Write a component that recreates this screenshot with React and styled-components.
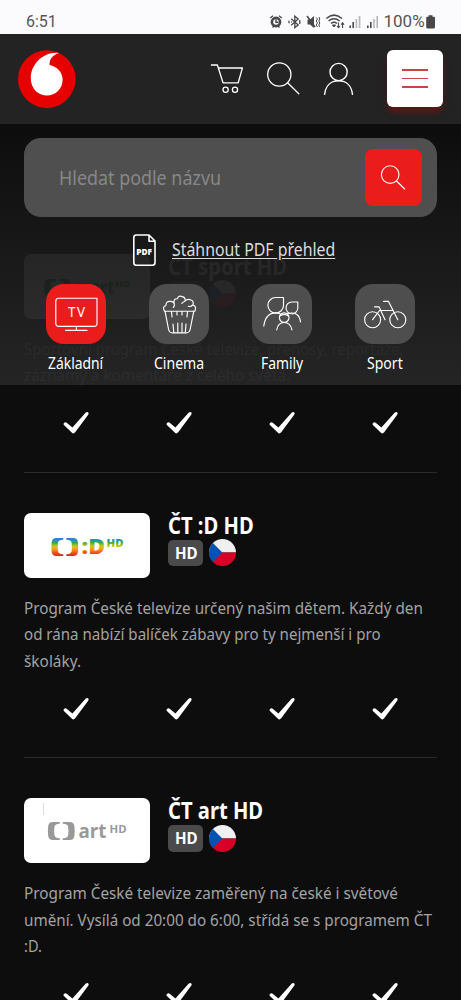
import React, { useLayoutEffect, useRef, useState } from "react";
import styled, { createGlobalStyle } from "styled-components";

const GlobalStyle = createGlobalStyle`
  *, *::before, *::after { box-sizing: border-box; }
  body {
    margin: 0;
    background: #0d0d0d;
    color: #fff;
    font-family: "Noto Sans", "Open Sans", sans-serif;
    overflow: hidden;
  }
  svg { display: block; flex: none; }
`;

/* ---------- text fitted to a given width ---------- */

const FitBox = styled.span`
  display: block;
  width: ${(p) => p.$w}px;
  white-space: nowrap;
`;
const FitInner = styled.span`
  display: inline-block;
  transform-origin: 0 50%;
`;
function Fit({ w, children }) {
  const ref = useRef(null);
  const [k, setK] = useState(1);
  useLayoutEffect(() => {
    setK(w / ref.current.offsetWidth);
  }, [w]);
  return (
    <FitBox $w={w}>
      <FitInner ref={ref} style={{ transform: `scaleX(${k})` }}>
        {children}
      </FitInner>
    </FitBox>
  );
}

/* ---------- page frame ---------- */

const Screen = styled.div`
  position: relative;
  width: 461px;
  height: 1000px;
  overflow: hidden;
  background: #0d0d0d;
`;
const Overlay = styled.div`
  position: absolute;
  inset: 0 0 auto 0;
`;
const StatusBar = styled.div`
  height: 34px;
  padding: 9px 25px 0 26px;
  display: flex;
  justify-content: space-between;
  background: #fbfbfe;
  color: #555;
  font: 17px/25px Roboto, sans-serif;
`;
const StatusRight = styled.div`
  display: flex;
  align-items: flex-start;
`;
const Percent = styled.div`
  margin: 0 1.5px 0 1px;
`;
const Header = styled.header`
  height: 90px;
  padding: 0 18px 1px;
  display: flex;
  align-items: center;
  background: #232323;
`;
const HeaderIcons = styled.div`
  display: flex;
  align-items: center;
  gap: 22px;
  margin-left: auto;
  margin-right: 30.5px;
`;
const MenuButton = styled.button`
  width: 56.5px;
  height: 57px;
  padding: 0;
  border: 0;
  border-radius: 6px;
  background: #fff;
  display: flex;
  flex-direction: column;
  align-items: center;
  justify-content: center;
  gap: 7.4px;
  box-shadow: 0 6px 6px -1px rgba(160, 10, 10, 0.5);
`;
const MenuLine = styled.span`
  width: 26px;
  height: 1.2px;
  background: #cb4444;
`;

/* ---------- filter panel ---------- */

const Panel = styled.section`
  height: 260.5px;
  padding: 14px 24px 0;
  background: linear-gradient(rgba(13, 13, 13, 0.95), rgba(38, 38, 38, 0.95));
`;
const SearchBox = styled.div`
  height: 79px;
  padding: 0 15.5px 0 34.5px;
  border-radius: 17px;
  background: #4f4f4f;
  display: flex;
  align-items: center;
  justify-content: space-between;
  color: #878787;
  font-size: 20px;
`;
const SearchButton = styled.button`
  width: 57px;
  height: 57px;
  padding: 0;
  border: 0;
  border-radius: 8px;
  background: #eb1c1c;
  display: grid;
  place-items: center;
`;
const PdfRow = styled.div`
  margin: 17px 0 0 109px;
  height: 32px;
  display: flex;
  align-items: center;
  gap: 16px;
`;
const PdfLink = styled.a`
  padding-bottom: 2px;
  color: #dcdcdc;
  font-size: 18px;
  line-height: 26px;
  text-decoration: underline;
  text-decoration-thickness: 1.3px;
  text-underline-offset: 2px;
`;
const Columns = styled.div`
  display: grid;
  grid-template-columns: repeat(4, 1fr);
  justify-items: center;
`;
const Categories = styled(Columns)`
  margin-top: 18px;
`;
const Category = styled.div`
  display: flex;
  flex-direction: column;
  align-items: center;
  font-size: 16px;
  line-height: 24px;
  gap: 7px;
`;
const Tile = styled.div`
  width: 60px;
  height: 60px;
  border-radius: 18px;
  background: ${(p) => (p.$active ? "#eb1c1c" : "#4e4e4e")};
`;

/* ---------- channel list ---------- */

const List = styled.main`
  padding: 212.8px 24px 0;
`;
const Channel = styled.article`
  padding-top: 40px;
  border-top: 1px solid #2b2b2b;
`;
const Top = styled.div`
  display: flex;
  gap: 18px;
`;
const LogoCard = styled.div`
  width: 126px;
  height: 65px;
  border-radius: 7px;
  background: #fff;
`;
const Info = styled.div`
  display: flex;
  flex-direction: column;
`;
const Title = styled.h2`
  margin: -2px 0 0;
  height: 28.5px;
  font-size: 22.5px;
  line-height: 29px;
  font-weight: 700;
`;
const Tags = styled.div`
  display: flex;
  align-items: center;
  gap: 6px;
`;
const Quality = styled.span`
  width: 35px;
  height: 26.5px;
  padding-left: 6.5px;
  border-radius: 5px;
  background: #4a4a4a;
  font-size: 16.5px;
  line-height: 25px;
  font-weight: 700;
`;
const Text = styled.div`
  margin-top: 17px;
  color: #a3a3a3;
  font-size: 17px;
  line-height: 26.5px;
`;
const Checks = styled(Columns)`
  height: 83px;
  padding-top: 22.7px;
`;

/* ---------- drawings ---------- */

const line = { fill: "none", stroke: "#fff", strokeLinecap: "round", strokeLinejoin: "round" };

const BrandMark = () => (
  <svg width="58" height="58" viewBox="18 49.5 58 58">
    <circle cx="46.8" cy="78.6" r="28.8" fill="#e60000" />
    <path fill="#fff" d="M59 52.4C52.5 54.2 49.2 59 49.6 64.4C57 66 62.6 71.3 62.6 79.3C62.6 88.5 55.6 95 47 95C38 95 30.8 88.3 30.8 77.2C30.8 65 42 51 59 52.4Z" />
  </svg>
);
const CartIcon = () => (
  <svg width="34" height="34" viewBox="210 62 34 34" {...line} strokeWidth="1.3">
    <path d="M211.4 65H217.4L223 82.8H238.2L242.4 68H218.4" />
    <circle cx="225.6" cy="89.7" r="2.6" />
    <circle cx="235" cy="89.7" r="2.6" />
  </svg>
);
const LoupeIcon = () => (
  <svg width="34" height="34" viewBox="266 62 34 34" {...line} strokeWidth="1.3">
    <circle cx="279.3" cy="74.5" r="11.6" />
    <path d="M287.6 82.8L298.8 93.8" />
  </svg>
);
const UserIcon = () => (
  <svg width="34" height="34" viewBox="322 62 34 34" {...line} strokeWidth="1.4">
    <circle cx="338.6" cy="72" r="8.6" />
    <path d="M324.6 94.4C325.6 86 330.7 80.8 338.6 80.8S351.6 86 352.5 94.4" />
  </svg>
);
const SmallLoupe = () => (
  <svg width="27" height="27" viewBox="380 164 27 27" {...line} strokeWidth="1.1">
    <circle cx="390.2" cy="174.6" r="8.8" />
    <path d="M396.5 181L404.7 189" />
  </svg>
);
const PdfIcon = () => (
  <svg width="23" height="32" viewBox="133 234 23 32" {...line} strokeWidth="1.6">
    <path d="M136.3 235H149L155 241V262.5Q155 265.2 152.3 265.2H136.3Q133.8 265.2 133.8 262.5V237.6Q133.8 235 136.3 235ZM149 235.4V241.2H154.6" />
    <text x="136.3" y="254.8" fontSize="8.6" fontWeight="900" fontFamily="Noto Sans" fill="#fff" stroke="none" textLength="15.8" lengthAdjust="spacingAndGlyphs">PDF</text>
  </svg>
);
const StatusIcons = () => (
  <svg width="114" height="25" viewBox="268 9 114 25" fill="none" stroke="#484848" strokeWidth="1.3">
    <circle cx="275" cy="22" r="4.1" strokeWidth="2.6" />
    <path d="M275 19.6V22.3H277.3M269.3 18L272 15.8M280.7 18L278 15.8M271.5 27.5L273 26M278.5 27.5L277 26" strokeWidth="1.4" />
    <path d="M290.2 18.8L297.2 25L293.8 27.6V16.2L297.2 19L290.2 25.2" />
    <path d="M288 20.8V23.2M290.2 22H291M298.8 20V24" />
    <path d="M306.5 19.5H309L313 16V28L309 24.5H306.5Z" fill="#484848" stroke="none" />
    <path d="M306 16L314 27" strokeWidth="1.5" />
    <path d="M315.2 17.5L316.5 19L315.2 21L316.5 23L315.2 25L316.5 27M318 17L318.8 19L317.8 21L318.8 23L317.8 25L318.8 27" strokeWidth="1" />
    <path d="M325.3 18.5Q333 11.8 341 18.5M327.6 21Q333 16.6 338.6 21M330 23.5Q333 21 336 23.5" strokeWidth="1.5" />
    <path d="M331.4 25L333 27L334.6 25Z" fill="#484848" strokeWidth="1" />
    <path d="M337.5 22.5V27.5M336 26L337.5 27.7L339 26M341.6 28V23M340.1 24.6L341.6 22.8L343.1 24.6" strokeWidth="1.1" />
    <g strokeWidth="1.6">
      <path d="M349.2 25.5V28M366.8 25.5V28" />
      <path d="M352.2 22V28M369.8 22V28" />
      <path d="M355.4 19V28M358.6 16V28M373 19V28M376.2 16V28" stroke="#b6b6ba" />
    </g>
  </svg>
);
const Battery = () => (
  <svg width="10" height="25" viewBox="426 9 10 25">
    <path fill="#484848" d="M428.5 15.2H432.5V16.8H434Q435 16.8 435 18V27Q435 28.4 433.8 28.4H427.4Q426.2 28.4 426.2 27V18Q426.2 16.8 427.2 16.8H428.5Z" />
  </svg>
);

const TileSvg = ({ children }) => (
  <svg width="60" height="60" viewBox="0 0 60 60" {...line} strokeWidth="1.15">
    {children}
  </svg>
);
const TvArt = () => (
  <TileSvg>
    <path d="M12.5 14.2H51V39.2Q51 42.4 47.8 42.4H13Q9.8 42.4 9.8 39.2V17.2Q9.8 14.2 12.5 14.2ZM30.4 42.5V46.2M19.5 46.4H41" />
    <text x="22" y="33" fontSize="13.5" fontFamily="Noto Sans" fill="#fff" stroke="none" letterSpacing="1.6" textLength="18.6" lengthAdjust="spacingAndGlyphs">TV</text>
  </TileSvg>
);
const PopcornArt = () => (
  <TileSvg>
    <path d="M16 27.2L19.6 45.5Q20.3 48.8 23.5 48.8H37.2Q40.4 48.8 41.1 45.5L44.8 27.2" />
    <path d="M15.5 27.2Q13 22.8 16.8 21.8Q17 16.8 21.5 17.4Q24 17.3 25.2 19.4Q24 14.5 28.4 14.8Q29.5 11 33.2 12.6Q36.5 13.3 36.2 16.8Q38.6 14.6 42 16Q45 17 44 20.8Q48 22.5 45.8 27.2ZM25.2 19.4Q26 22 24.3 23.5M36.2 17Q34 18 32.8 19.4M43.8 21Q42 23 39.3 22.3" />
    <path d="M22.5 27.5L23 33M28 27.5V31M33 27.5V31M38.5 27.5L38 33M24 40L24.8 48.5M28.8 39V48.5M33 39V48.5M37 40L36.3 48.5" />
  </TileSvg>
);
const FamilyArt = () => (
  <TileSvg>
    <path d="M31.5 13.5H23.8A7.8 7.8 0 1 0 31.5 21.2ZM45.8 18H39.9A5.9 5.9 0 1 0 45.8 24Z" />
    <path d="M11.8 42Q13.5 28.8 23.8 28.8Q26.2 28.8 28 29.7M35.5 29.5Q47 27 48.5 37.8" />
    <circle cx="32.2" cy="33.6" r="4.8" />
    <path d="M27.7 32Q32 28.7 36.7 32M24.7 45.8Q26 38.5 32.2 38.5T40 45.8" />
  </TileSvg>
);
const BikeArt = () => (
  <TileSvg>
    <circle cx="17.6" cy="35.7" r="8" />
    <circle cx="42.8" cy="35.7" r="8" />
    <path d="M28.6 17.4H33.5L42.8 35.7M19.5 22.8H24L30 35.7M17.6 35.7L24.5 26.5H37.7" />
  </TileSvg>
);

const Check = () => (
  <svg width="28" height="24" viewBox="0 0 28 24">
    <path fill="#fff" d="M2 11.9Q3.5 10.7 4.7 11.8L10.4 16.4L23.8 1.6Q25.5.4 26.5 1.7Q27 2.8 26 4L13 21.6Q11.4 23.3 9.7 21.5L1.9 14Q1 12.9 2 11.9Z" />
  </svg>
);
const Flag = () => (
  <svg width="27" height="27" viewBox="0 0 27 27">
    <defs>
      <clipPath id="round"><circle cx="13.5" cy="13.5" r="13.5" /></clipPath>
    </defs>
    <g clipPath="url(#round)">
      <path fill="#f0f0f0" d="M0 0H27V13.5H0Z" />
      <path fill="#d80027" d="M0 13.5H27V27H0Z" />
      <path fill="#0052b4" d="M0 0L3.4 3.4L13.3 13.5L3.4 23.6L0 27Z" />
    </g>
  </svg>
);

const Brackets = ({ x, y, fill }) => (
  <g transform={`translate(${x} ${y})`} fill={fill}>
    <path d="M12 0H5Q1 0 .4 4Q-.3 9 .4 14Q1 18 5 18H12V16.2Q7.4 16 6.7 13.5Q6 9 6.7 4.5Q7.4 2 12 1.8Z" />
    <path d="M15 0H22Q26 0 26.6 4Q27.3 9 26.6 14Q26 18 22 18H15V16.2Q19.6 16 20.3 13.5Q21 9 20.3 4.5Q19.6 2 15 1.8Z" />
  </g>
);
const logoFont = { fontFamily: '"Open Sans", "Noto Sans", sans-serif', fontWeight: 800, lengthAdjust: "spacingAndGlyphs" };

const Rainbow = ({ id, from, to }) => (
  <linearGradient id={id} gradientUnits="userSpaceOnUse" x1="0" y1={from} x2="0" y2={to}>
    <stop offset="0" stopColor="#2f78e8" />
    <stop offset=".14" stopColor="#2490c8" />
    <stop offset=".27" stopColor="#36ad35" />
    <stop offset=".45" stopColor="#c4c81c" />
    <stop offset=".6" stopColor="#f5a515" />
    <stop offset=".8" stopColor="#ee5a1c" />
    <stop offset="1" stopColor="#dd2222" />
  </linearGradient>
);
const DLogo = () => (
  <svg width="126" height="65" viewBox="0 0 126 65">
    <defs>
      <Rainbow id="rainbowMark" from="0" to="18" />
      <Rainbow id="rainbowText" from="24.5" to="43" />
    </defs>
    <Brackets x="27.3" y="25" fill="url(#rainbowMark)" />
    <text x="57.5" y="41" fontSize="21" textLength="23.5" fill="url(#rainbowText)" {...logoFont}>:D</text>
    <text x="82.5" y="33.8" fontSize="10" textLength="17" fill="url(#rainbowText)" {...logoFont}>HD</text>
  </svg>
);
const ArtLogo = () => (
  <svg width="126" height="65" viewBox="0 0 126 65">
    <path d="M19.5 5V17" stroke="#ddd" />
    <Brackets x="23.8" y="24" fill="#999" />
    <text x="54.5" y="39.8" fontSize="20" textLength="28" fill="#999" {...logoFont} fontWeight="700">art</text>
    <text x="85.5" y="35" fontSize="10.5" textLength="17" fill="#999" {...logoFont} fontWeight="700">HD</text>
  </svg>
);
const SportLogo = () => (
  <svg width="126" height="65" viewBox="0 0 126 65">
    <Brackets x="20" y="25" fill="#0a8a2c" />
    <text x="50" y="40" fontSize="19" textLength="40" fill="#0a8a2c" {...logoFont}>sport</text>
    <text x="91" y="33.4" fontSize="9" textLength="15" fill="#0a8a2c" {...logoFont}>HD</text>
  </svg>
);

/* ---------- data ---------- */

const categories = [
  { name: "Základní", w: 55.5, Art: TvArt, active: true },
  { name: "Cinema", w: 50, Art: PopcornArt },
  { name: "Family", w: 42.5, Art: FamilyArt },
  { name: "Sport", w: 36, Art: BikeArt },
];
const channels = [
  {
    title: "ČT sport HD", w: 119, Logo: SportLogo,
    lines: [["Sportovní program České televize, přenosy, reportáže,", 380], ["záznamy a komentáře z celého světa.", 266]],
  },
  {
    title: "ČT :D HD", w: 86, Logo: DLogo,
    lines: [["Program České televize určený našim dětem. Každý den", 398.5], ["od rána nabízí balíček zábavy pro ty nejmenší i pro", 357], ["školáky.", 57]],
  },
  {
    title: "ČT art HD", w: 95, Logo: ArtLogo,
    lines: [["Program České televize zaměřený na české i světové", 374], ["umění. Vysílá od 20:00 do 6:00, střídá se s programem ČT", 407.5], [":D.", 18]],
  },
];

export default function App() {
  return (
    <Screen>
      <GlobalStyle />
      <List>
        {channels.map(({ title, w, Logo, lines }) => (
          <Channel key={title}>
            <Top>
              <LogoCard><Logo /></LogoCard>
              <Info>
                <Title><Fit w={w}>{title}</Fit></Title>
                <Tags>
                  <Quality><Fit w={23}>HD</Fit></Quality>
                  <Flag />
                </Tags>
              </Info>
            </Top>
            <Text>
              {lines.map(([t, lw]) => <Fit key={t} w={lw}>{t}</Fit>)}
            </Text>
            <Checks>
              <Check /><Check /><Check /><Check />
            </Checks>
          </Channel>
        ))}
      </List>
      <Overlay>
        <StatusBar>
          <Fit w={31}>6:51</Fit>
          <StatusRight>
            <StatusIcons />
            <Percent><Fit w={41}>100%</Fit></Percent>
            <Battery />
          </StatusRight>
        </StatusBar>
        <Header>
          <BrandMark />
          <HeaderIcons><CartIcon /><LoupeIcon /><UserIcon /></HeaderIcons>
          <MenuButton><MenuLine /><MenuLine /><MenuLine /></MenuButton>
        </Header>
        <Panel>
          <SearchBox>
            <Fit w={162}>Hledat podle názvu</Fit>
            <SearchButton><SmallLoupe /></SearchButton>
          </SearchBox>
          <PdfRow>
            <PdfIcon />
            <PdfLink><Fit w={163}><u>Stáhnout PDF přehled</u></Fit></PdfLink>
          </PdfRow>
          <Categories>
            {categories.map(({ name, w, Art, active }) => (
              <Category key={name}>
                <Tile $active={active}><Art /></Tile>
                <Fit w={w}>{name}</Fit>
              </Category>
            ))}
          </Categories>
        </Panel>
      </Overlay>
    </Screen>
  );
}
